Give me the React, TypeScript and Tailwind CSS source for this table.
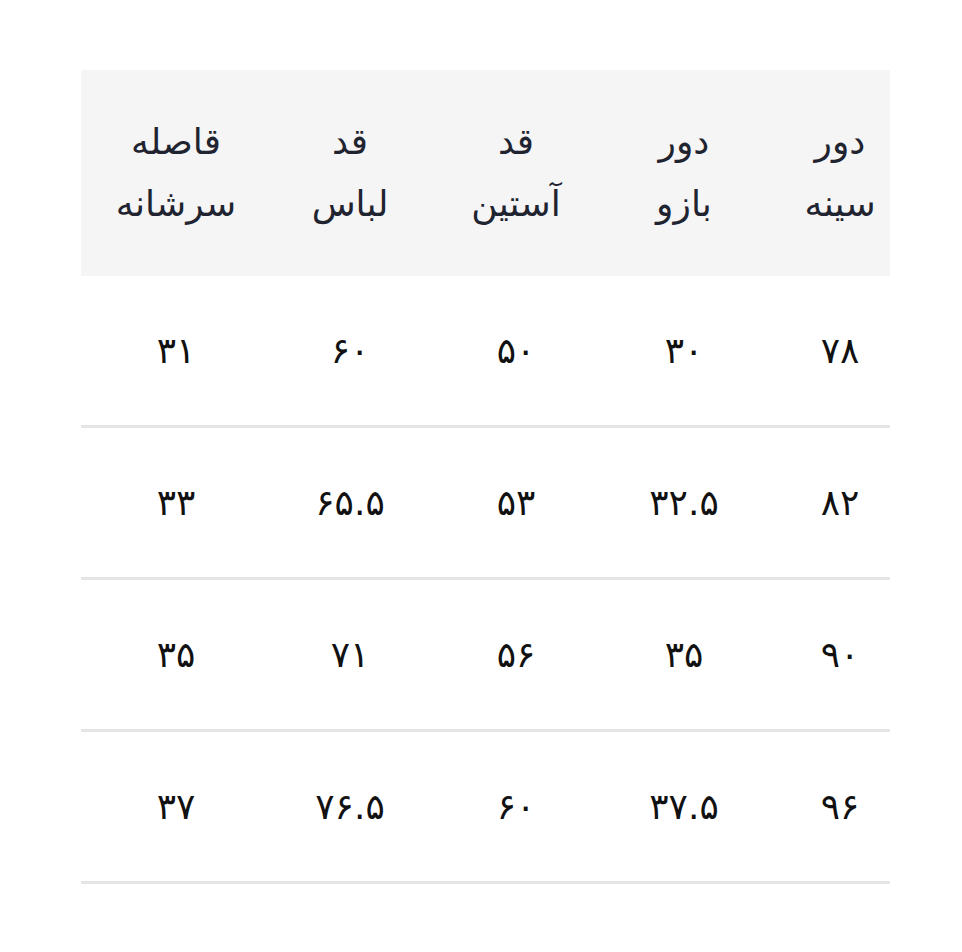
const headers = [
  ["دور", "سینه"],
  ["دور", "بازو"],
  ["قد", "آستین"],
  ["قد", "لباس"],
  ["قاصله", "سرشانه"],
];

const rows = [
  ["۷۸", "۳۰", "۵۰", "۶۰", "۳۱"],
  ["۸۲", "۳۲.۵", "۵۳", "۶۵.۵", "۳۳"],
  ["۹۰", "۳۵", "۵۶", "۷۱", "۳۵"],
  ["۹۶", "۳۷.۵", "۶۰", "۷۶.۵", "۳۷"],
];

const App: React.FC = () => {
  return (
    <div className="bg-white w-[962px] h-[952px] pt-[70px] pl-[81px] pr-[72px]" dir="rtl">
      <table
        className="w-full table-fixed border-collapse text-center text-[#1f2430]"
        style={{ fontFamily: '"DejaVu Sans", sans-serif' }}
      >
        <colgroup>
          <col className="w-[100px]" />
          <col className="w-[212px]" />
          <col className="w-[124px]" />
          <col className="w-[208px]" />
          <col />
        </colgroup>
        <thead>
          <tr className="bg-[#f5f5f5]">
            {headers.map((h, i) => (
              <th
                key={i}
                className={`font-normal text-[36px] leading-[62px] py-[41px] ${i === 4 ? "pl-[25px]" : ""}`}
              >
                {h[0]}
                <br />
                {h[1]}
              </th>
            ))}
          </tr>
        </thead>
        <tbody>
          {rows.map((r, ri) => (
            <tr key={ri} className="border-b-[3px] border-[#e5e5e5]">
              {r.map((c, ci) => (
                <td
                  key={ci}
                  className={`text-[36px] leading-[62px] pt-[44px] pb-[43px] text-[#111] ${ci === 4 ? "pl-[25px]" : ""}`}
                >
                  {c}
                </td>
              ))}
            </tr>
          ))}
        </tbody>
      </table>
    </div>
  );
};

export default App;
